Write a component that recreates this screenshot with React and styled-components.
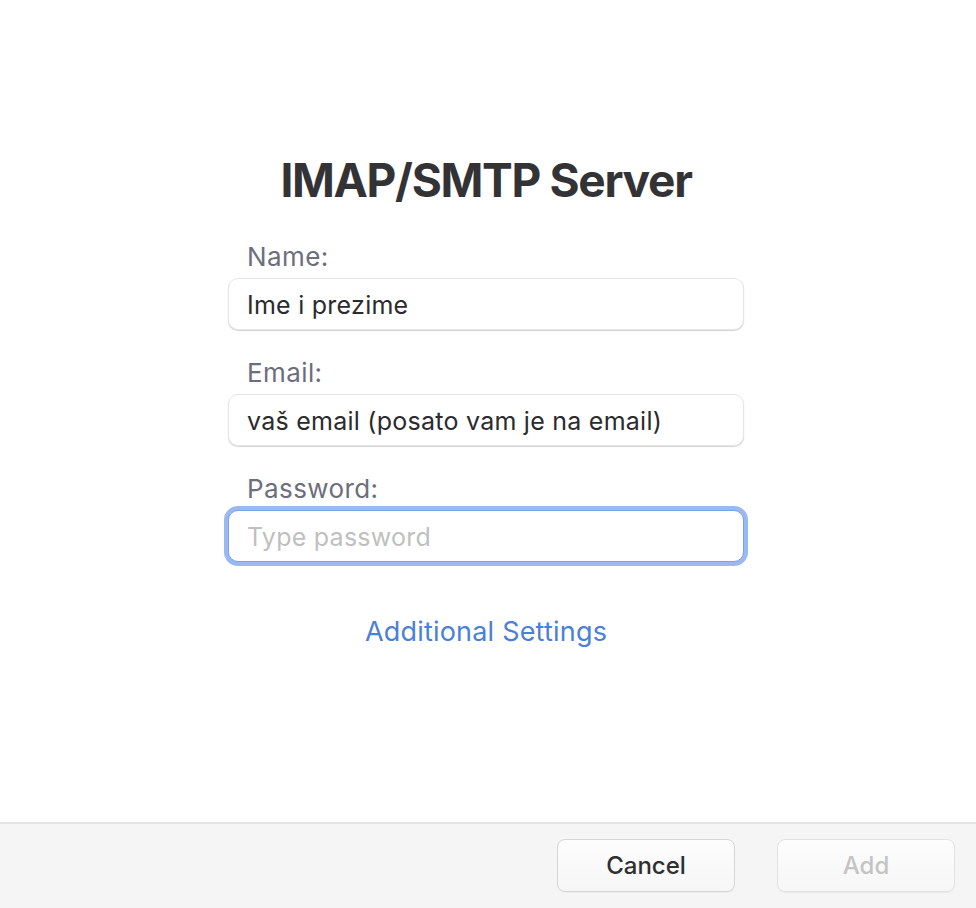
import React from "react";
import styled, { createGlobalStyle } from "styled-components";

const GlobalStyle = createGlobalStyle`
  html, body {
    margin: 0;
    padding: 0;
    background: #fff;
  }
  body {
    font-family: Inter, "Liberation Sans", Arial, sans-serif;
    -webkit-font-smoothing: antialiased;
  }
`;

const Window = styled.div`
  width: 976px;
  height: 908px;
  display: flex;
  flex-direction: column;
  background: #fff;
`;

const Main = styled.div`
  flex: 1;
  display: flex;
  flex-direction: column;
  align-items: center;
  padding: 152px 4px 0 0;
`;

const Title = styled.h1`
  margin: 0 0 34px;
  font-size: 46px;
  line-height: 56px;
  font-weight: 700;
  color: #333336;
  letter-spacing: -1.3px;
`;

const Form = styled.div`
  width: 516px;
  display: flex;
  flex-direction: column;
  gap: 28px;
`;

const Field = styled.div`
  display: flex;
  flex-direction: column;
  gap: 6px;
`;

const Label = styled.label`
  padding-left: 19px;
  font-size: 26px;
  line-height: 30px;
  letter-spacing: 0.4px;
  color: #6c6e7d;
`;

const Input = styled.input`
  box-sizing: border-box;
  width: 100%;
  height: 52px;
  padding: 2px 18px 0;
  border-radius: 10px;
  border: 1px solid ${(p) => (p.$focused ? "#7d9fe8" : "#e6e6e6")};
  box-shadow: ${(p) =>
    p.$focused
      ? "0 0 0 4px #9ab8f2"
      : "0 1px 1px rgba(0, 0, 0, 0.18)"};
  background: #fff;
  font-family: inherit;
  font-size: 25px;
  letter-spacing: 0.25px;
  color: #2b2b2e;
  outline: none;

  &::placeholder {
    color: #bfbfbf;
  }
`;

const Link = styled.a`
  margin-top: 55px;
  font-size: 27px;
  line-height: 30px;
  letter-spacing: 0.2px;
  color: #4a7fdc;
  text-decoration: none;
  cursor: pointer;
`;

const Footer = styled.div`
  height: 86px;
  box-sizing: border-box;
  border-top: 2px solid #e3e3e3;
  background: #f5f5f5;
  display: flex;
  justify-content: flex-end;
  align-items: flex-start;
  gap: 42px;
  padding: 15px 21px 0 0;
`;

const Button = styled.button`
  width: 178px;
  height: 53px;
  border-radius: 8px;
  border: 1px solid #d6d6d6;
  background: linear-gradient(#fdfdfd, #f6f6f6);
  box-shadow: 0 1px 0 rgba(0, 0, 0, 0.04);
  font-family: inherit;
  font-size: 24px;
  font-weight: 500;
  color: ${(p) => (p.disabled ? "#c4c4c4" : "#2f2f31")};
  border-color: ${(p) => (p.disabled ? "#e2e2e2" : "#d6d6d6")};
`;

const App = () => {
  return (
    <Window>
      <GlobalStyle />
      <Main>
        <Title>IMAP/SMTP Server</Title>
        <Form>
          <Field>
            <Label>Name:</Label>
            <Input defaultValue="Ime i prezime" />
          </Field>
          <Field>
            <Label>Email:</Label>
            <Input defaultValue="vaš email (posato vam je na email)" />
          </Field>
          <Field>
            <Label>Password:</Label>
            <Input $focused type="password" placeholder="Type password" />
          </Field>
        </Form>
        <Link>Additional Settings</Link>
      </Main>
      <Footer>
        <Button>Cancel</Button>
        <Button disabled>Add</Button>
      </Footer>
    </Window>
  );
};

export default App;
